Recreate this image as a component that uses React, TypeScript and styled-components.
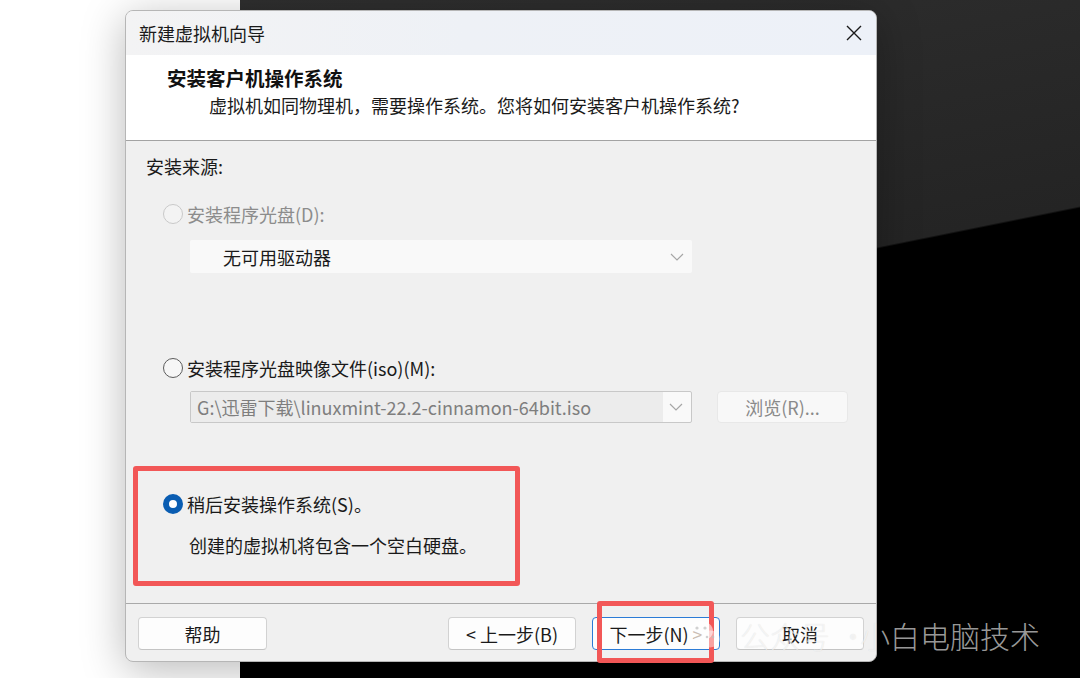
import React from "react";
import styled, { createGlobalStyle } from "styled-components";

const FONT = `"Noto Sans CJK SC", "Noto Sans", sans-serif`;

const GlobalStyle = createGlobalStyle`
  html, body { margin: 0; padding: 0; }
  body { font-family: ${FONT}; }
  * { box-sizing: border-box; }
`;

const Page = styled.div`
  position: relative;
  width: 1080px;
  height: 678px;
  overflow: hidden;
  padding: 10px 0 0 125px;
  font-family: ${FONT};
  background:
    linear-gradient(#ffffff, #ffffff) left top / 240px 100% no-repeat,
    linear-gradient(168.6deg, #2f2f2f 0px, #242424 368px, #000 370px, #000 100%) 240px 0 / 840px 678px no-repeat;
`;

const Dialog = styled.section`
  width: 752px;
  height: 652px;
  border: 1px solid #b6b6b6;
  border-radius: 8px;
  overflow: hidden;
  background: #f0f0f0;
  box-shadow: 0 8px 44px rgba(0, 0, 0, 0.28);
  display: flex;
  flex-direction: column;
  color: #1a1a1a;
  font-size: 18px;
  line-height: 26px;
`;

const TitleBar = styled.header`
  height: 44px;
  flex: none;
  display: flex;
  align-items: center;
  justify-content: space-between;
  padding-left: 13px;
  background: linear-gradient(90deg, #f3f3f4 0%, #eef1f6 45%, #edf1f8 100%);
`;

const TitleText = styled.span`
  font-size: 18px;
  color: #1a1a1a;
`;

const CloseButton = styled.button`
  width: 44px;
  height: 44px;
  border: none;
  background: transparent;
  display: flex;
  align-items: center;
  justify-content: center;
  padding: 0;
`;

const Header = styled.div`
  height: 86px;
  flex: none;
  background: #ffffff;
  border-bottom: 1px solid #a3a3a3;
  padding: 10px 0 0 41px;
`;

const Heading = styled.h1`
  margin: 0;
  font-size: 19.5px;
  font-weight: 700;
  line-height: 26px;
  color: #111;
`;

const Subtitle = styled.p`
  margin: 1px 0 0 42px;
  font-size: 18px;
  line-height: 26px;
`;

const Content = styled.div`
  flex: 1;
  padding: 12px 20px 0 20px;
  display: flex;
  flex-direction: column;
  align-items: flex-start;
`;

const SectionLabel = styled.div`
  height: 26px;
`;

const RadioRow = styled.label<{ $top: number; $indent?: number; $disabled?: boolean }>`
  display: flex;
  align-items: center;
  gap: 4px;
  height: 26px;
  margin-top: ${(p) => p.$top}px;
  margin-left: ${(p) => p.$indent ?? 17}px;
  color: ${(p) => (p.$disabled ? "#8c8c8c" : "#1a1a1a")};
`;

const RadioDot = styled.span<{ $state: "disabled" | "off" | "on" }>`
  flex: none;
  width: 20px;
  height: 20px;
  border-radius: 50%;
  ${(p) =>
    p.$state === "on"
      ? "border: 6px solid #0a5db2; background: #ffffff;"
      : p.$state === "off"
      ? "border: 1.5px solid #5b5b5b; background: #f6f6f6;"
      : "border: 1.5px solid #c9c9c9; background: #f3f3f3;"}
`;

const FieldRow = styled.div<{ $top: number }>`
  display: flex;
  align-items: center;
  gap: 25px;
  margin-top: ${(p) => p.$top}px;
  margin-left: 44px;
`;

const Select = styled.div<{ $bordered?: boolean }>`
  width: 502px;
  height: ${(p) => (p.$bordered ? 32 : 33)}px;
  display: flex;
  background: #f9f9f9;
  border: ${(p) => (p.$bordered ? "1.5px solid #c8c8c8" : "none")};
  border-radius: 2px;
`;

const SelectText = styled.div<{ $muted?: boolean; $pad: number }>`
  flex: 1;
  display: flex;
  align-items: center;
  padding-left: ${(p) => p.$pad}px;
  background: ${(p) => (p.$muted ? "#ececec" : "transparent")};
  color: ${(p) => (p.$muted ? "#7e7e7e" : "#1a1a1a")};
  white-space: nowrap;
  overflow: hidden;
`;

const Chevron = styled.div`
  width: 28px;
  flex: none;
  display: flex;
  align-items: center;
  justify-content: center;
  padding-right: 2px;
`;

const BrowseButton = styled.button`
  width: 131px;
  height: 32px;
  border: 1px solid #e8e8e8;
  border-radius: 4px;
  background: #f8f8f8;
  color: #8a8a8a;
  font-family: ${FONT};
  font-size: 18px;
  padding: 0;
`;

const Highlight = styled.div`
  margin-top: 43px;
  margin-left: -13px;
  width: 387px;
  height: 120px;
  border: 5px solid #f25757;
  border-radius: 3px;
  padding: 20px 0 0 25px;
`;

const Description = styled.div`
  margin: 15px 0 0 26px;
  height: 26px;
`;

const Footer = styled.footer`
  height: 58px;
  flex: none;
  border-top: 1px solid #a9a9a9;
  display: flex;
  align-items: flex-start;
  padding: 13px 12px 0 12px;
  gap: 16px;
`;

const Spacer = styled.div`
  flex: 1;
`;

const FooterButton = styled.button<{ $primary?: boolean }>`
  width: 128px;
  height: 33px;
  border-radius: 4px;
  background: #fdfdfd;
  border: ${(p) => (p.$primary ? "1.5px solid #2b7bd6" : "1px solid #d2d2d2")};
  border-bottom-color: ${(p) => (p.$primary ? "#2b7bd6" : "#c4c4c4")};
  font-family: ${FONT};
  font-size: 18px;
  color: #1a1a1a;
  padding: 0;
`;

const HelpButton = styled(FooterButton)`
  width: 129px;
`;

const Arrow = styled.span`
  color: #8a6f5a;
`;

const Annotation = styled.div`
  position: absolute;
  left: 597px;
  top: 601px;
  width: 117px;
  height: 62px;
  border: 5px solid #f25757;
  border-radius: 3px;
`;

const Watermark = styled.div`
  position: absolute;
  left: 688px;
  top: 616px;
  display: flex;
  align-items: center;
  gap: 18px;
  font-family: ${FONT};
  font-size: 30px;
  font-weight: 300;
  line-height: 38px;
  color: rgba(255, 255, 255, 0.62);
  text-shadow: 0 0 1px rgba(0, 0, 0, 0.12);
  white-space: nowrap;
  pointer-events: none;
`;

const Dot = styled.span`
  display: inline-block;
  width: 14px;
  margin: 0 8px;
  text-align: center;
`;

const ChevronIcon = () => (
  <svg width="14" height="8" viewBox="0 0 14 8">
    <polyline points="1,1 7,7 13,1" fill="none" stroke="#a6a6a6" strokeWidth="1.2" />
  </svg>
);

const WeChatIcon = () => (
  <svg width="34" height="32" viewBox="0 0 34 32">
    <ellipse cx="13" cy="12" rx="12" ry="10" fill="rgba(255,255,255,0.55)" />
    <ellipse cx="22" cy="20" rx="10" ry="8.5" fill="rgba(255,255,255,0.45)" />
    <circle cx="9" cy="9" r="1.6" fill="rgba(190,190,190,0.7)" />
    <circle cx="17" cy="9" r="1.6" fill="rgba(190,190,190,0.7)" />
    <circle cx="19" cy="18" r="1.3" fill="rgba(190,190,190,0.7)" />
    <circle cx="25" cy="18" r="1.3" fill="rgba(190,190,190,0.7)" />
  </svg>
);

export default function App() {
  return (
    <Page>
      <GlobalStyle />
      <Dialog>
        <TitleBar>
          <TitleText>新建虚拟机向导</TitleText>
          <CloseButton aria-label="关闭">
            <svg width="16" height="16" viewBox="0 0 16 16">
              <path d="M1 1 L15 15 M15 1 L1 15" stroke="#1a1a1a" strokeWidth="1.4" />
            </svg>
          </CloseButton>
        </TitleBar>
        <Header>
          <Heading>安装客户机操作系统</Heading>
          <Subtitle>虚拟机如同物理机，需要操作系统。您将如何安装客户机操作系统?</Subtitle>
        </Header>
        <Content>
          <SectionLabel>安装来源:</SectionLabel>
          <RadioRow $top={22} $disabled>
            <RadioDot $state="disabled" />
            安装程序光盘(D):
          </RadioRow>
          <FieldRow $top={13}>
            <Select>
              <SelectText $pad={33}>无可用驱动器</SelectText>
              <Chevron>
                <ChevronIcon />
              </Chevron>
            </Select>
          </FieldRow>
          <RadioRow $top={82}>
            <RadioDot $state="off" />
            安装程序光盘映像文件(iso)(M):
          </RadioRow>
          <FieldRow $top={10}>
            <Select $bordered>
              <SelectText $muted $pad={6}>G:\迅雷下载\linuxmint-22.2-cinnamon-64bit.iso</SelectText>
              <Chevron>
                <ChevronIcon />
              </Chevron>
            </Select>
            <BrowseButton>浏览(R)...</BrowseButton>
          </FieldRow>
          <Highlight>
            <RadioRow $top={0} $indent={0}>
              <RadioDot $state="on" />
              稍后安装操作系统(S)。
            </RadioRow>
            <Description>创建的虚拟机将包含一个空白硬盘。</Description>
          </Highlight>
        </Content>
        <Footer>
          <HelpButton>帮助</HelpButton>
          <Spacer />
          <FooterButton>&lt; 上一步(B)</FooterButton>
          <FooterButton $primary>
            下一步(N) <Arrow>&gt;</Arrow>
          </FooterButton>
          <FooterButton>取消</FooterButton>
        </Footer>
      </Dialog>
      <Annotation />
      <Watermark>
        <WeChatIcon />
        <span>
          公众号<Dot>·</Dot>小白电脑技术
        </span>
      </Watermark>
    </Page>
  );
}
